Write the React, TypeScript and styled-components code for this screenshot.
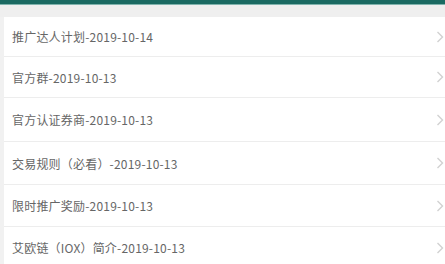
import React from 'react'
import styled, { createGlobalStyle } from 'styled-components'

const GlobalStyle = createGlobalStyle`
  html, body {
    margin: 0;
    padding: 0;
    background: #f1f1f1;
    font-family: "Microsoft YaHei", "Noto Sans CJK SC", "Liberation Sans", sans-serif;
    overflow: hidden;
  }
`

const Page = styled.div`
  width: 445px;
  height: 264px;
  background: #f1f1f1;
  overflow: hidden;
`

const TopBar = styled.div`
  height: 4px;
  background: #1b6a62;
  border-bottom: 1px solid #7fb3ad;
`

const Gap = styled.div`
  height: 12px;
  background: #efefef;
`

const List = styled.ul`
  list-style: none;
  margin: 0 0 0 4px;
  padding: 0;
  background: #fff;
`

const Row = styled.li<{ $h: number }>`
  height: ${(p) => p.$h}px;
  display: flex;
  align-items: center;
  justify-content: space-between;
  padding: 0 1px 0 8px;
  border-bottom: 1px solid #ededed;
  box-sizing: border-box;
`

const Title = styled.span`
  font-size: 12px;
  color: #666;
  letter-spacing: 0.2px;
`

const Chevron = () => (
  <svg width="8" height="12" viewBox="0 0 8 12">
    <path d="M1.5 1 L6.5 6 L1.5 11" fill="none" stroke="#d2d2d2" strokeWidth="1.4" />
  </svg>
)

const items = [
  { t: '推广达人计划-2019-10-14', h: 40 },
  { t: '官方群-2019-10-13', h: 41 },
  { t: '官方认证券商-2019-10-13', h: 44 },
  { t: '交易规则（必看）-2019-10-13', h: 43 },
  { t: '限时推广奖励-2019-10-13', h: 42 },
  { t: '艾欧链（IOX）简介-2019-10-13', h: 42 },
]

export default function App() {
  return (
    <Page>
      <GlobalStyle />
      <TopBar />
      <Gap />
      <List>
        {items.map((it) => (
          <Row key={it.t} $h={it.h}>
            <Title>{it.t}</Title>
            <Chevron />
          </Row>
        ))}
      </List>
    </Page>
  )
}
